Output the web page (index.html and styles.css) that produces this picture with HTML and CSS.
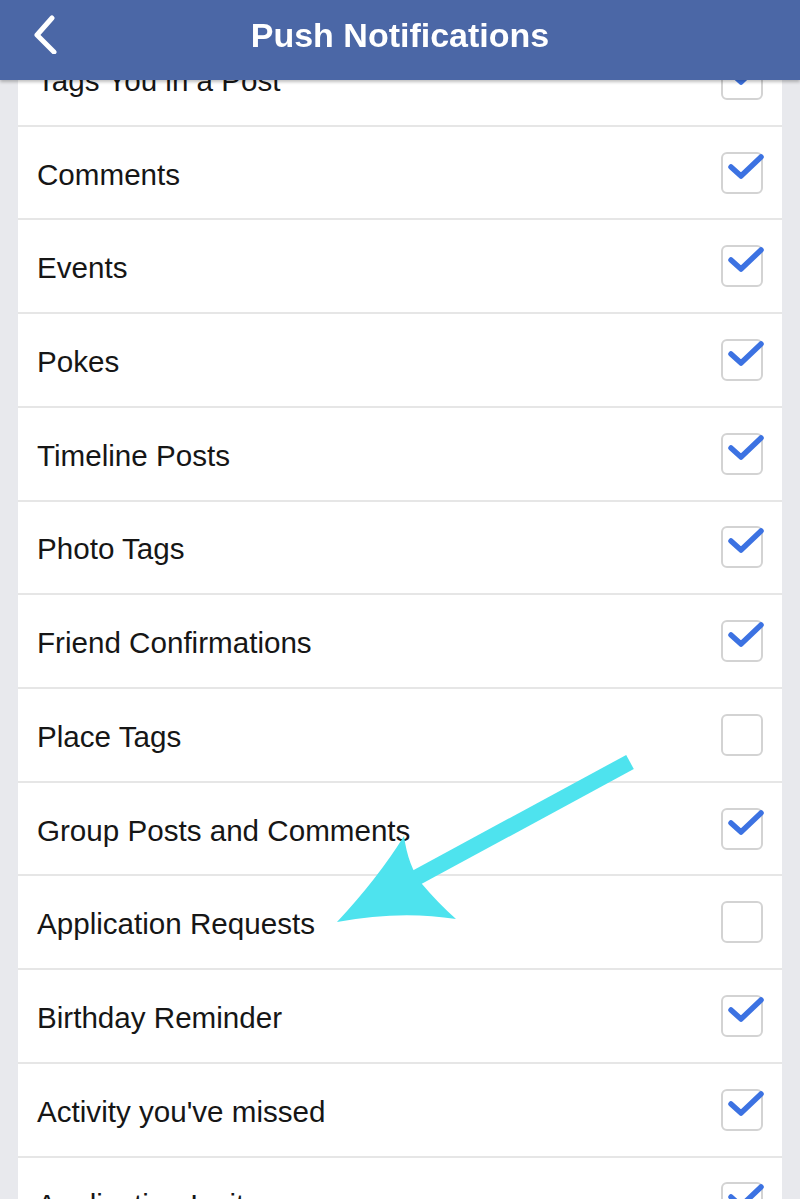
FILE: index.html
```html
<!DOCTYPE html>
<html lang="en">
<head>
    <meta charset="UTF-8">
    <meta name="viewport" content="width=device-width, initial-scale=1.0">
    <title>Push Notifications</title>
    <link rel="stylesheet" href="styles.css">
</head>
<body>
    <!-- top bar -->
    <div class="topbar">
        <svg class="back" width="30" height="40" viewBox="0 0 30 40">
            <path d="M22 4 L7 21 L24 38" fill="none" stroke="#fff" stroke-width="5" stroke-linecap="round" stroke-linejoin="round"/>
        </svg>
        <h1>Push Notifications</h1>
    </div>

    <!-- settings list -->
    <ul class="list">
        <li class="row"><span>Tags You in a Post</span><i class="box on"></i></li>
        <li class="row"><span>Comments</span><i class="box on"></i></li>
        <li class="row"><span>Events</span><i class="box on"></i></li>
        <li class="row"><span>Pokes</span><i class="box on"></i></li>
        <li class="row"><span>Timeline Posts</span><i class="box on"></i></li>
        <li class="row"><span>Photo Tags</span><i class="box on"></i></li>
        <li class="row"><span>Friend Confirmations</span><i class="box on"></i></li>
        <li class="row"><span>Place Tags</span><i class="box"></i></li>
        <li class="row"><span>Group Posts and Comments</span><i class="box on"></i></li>
        <li class="row"><span>Application Requests</span><i class="box"></i></li>
        <li class="row"><span>Birthday Reminder</span><i class="box on"></i></li>
        <li class="row"><span>Activity you've missed</span><i class="box on"></i></li>
        <li class="row"><span>Application Invites</span><i class="box on"></i></li>
    </ul>

    <!-- annotation arrow -->
    <svg class="arrow" width="800" height="1199" viewBox="0 0 800 1199">
        <line x1="630" y1="762" x2="412" y2="880" stroke="#4ee3ee" stroke-width="16"/>
        <path d="M337 922 Q378 878 404 836 Q408 866 422 884 Q438 903 456 919 Q400 910 337 922 Z" fill="#4ee3ee"/>
    </svg>

    <script>
        // draw the check marks
        document.querySelectorAll('.box.on').forEach(function(b) {
            b.innerHTML = '<svg width="44" height="44" viewBox="0 0 44 44"><path d="M10 15 L20 24 L40 5" fill="none" stroke="#3c72e2" stroke-width="5.5" stroke-linecap="round" stroke-linejoin="round"/></svg>';
        });
    </script>
</body>
</html>
```

FILE: styles.css
```css
body {
    margin: 0;
    background-color: #e8e9ed;
    font-family: "Liberation Sans", Arial, sans-serif;
    overflow: hidden;
}
.topbar {
    position: fixed;
    top: 0;
    left: 0;
    right: 0;
    height: 80px;
    background-color: #4b67a6;
    box-shadow: 0 2px 3px rgba(0, 0, 0, 0.25);
    display: flex;
    align-items: center;
    justify-content: center;
    z-index: 2;
}
.topbar h1 {
    margin: 0 0 9px;
    color: #fff;
    font-size: 34px;
    font-weight: bold;
}
.back {
    position: absolute;
    left: 30px;
    top: 14px;
}
.list {
    list-style: none;
    margin: 33px 18px 0;
    padding: 0;
    background-color: #fff;
}
.row {
    height: 93.73px;
    box-sizing: border-box;
    border-bottom: 2px solid #e6e6e6;
    display: flex;
    align-items: center;
    justify-content: space-between;
    padding: 0 19px 0 19px;
    font-size: 29.6px;
    color: #161616;
}
.row span {
    padding-top: 4px;
}
.box {
    position: relative;
    width: 42px;
    height: 42px;
    box-sizing: border-box;
    border: 2px solid #d3d3d3;
    border-radius: 6px;
}
.box svg {
    position: absolute;
    left: -2px;
    top: -2px;
}
.arrow {
    position: absolute;
    left: 0;
    top: 0;
    z-index: 1;
}
```
